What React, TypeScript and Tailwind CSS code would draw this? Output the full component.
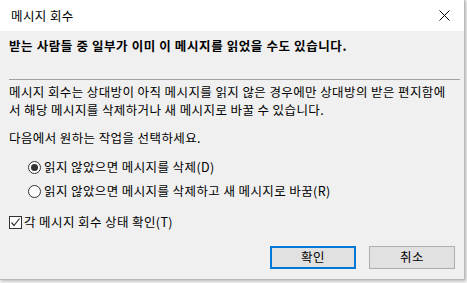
const font = { fontFamily: '"Noto Sans CJK KR", "Noto Sans", sans-serif' };

const Radio: React.FC<{ checked?: boolean; label: string }> = ({ checked, label }) => {
  return (
    <div className="flex h-[18px] items-center">
      <span className="flex h-[13px] w-[13px] items-center justify-center rounded-full border border-[#333333] bg-white">
        {checked && <span className="h-[7px] w-[7px] rounded-full bg-[#333333]" />}
      </span>
      <span className="ml-[3px]">{label}</span>
    </div>
  );
};

const App: React.FC = () => {
  return (
    <div className="h-[283px] w-[467px] overflow-hidden bg-[#f4f4f4] text-[12.5px] tracking-[0.4px] text-black" style={font}>
      <div className="flex h-[280px] w-[465px] flex-col border-r border-b border-[#b9b9b9] bg-[#f0f0f0] shadow-[1px_1px_3px_rgba(0,0,0,0.25)]">
        {/* title bar */}
        <div className="flex h-[31px] items-center justify-between bg-white pl-[11px] pr-[14px]">
          <span className="leading-[16px]">메시지 회수</span>
          <svg width="11" height="11" viewBox="0 0 11 11" className="text-black">
            <path d="M0.5 0.5 L10.5 10.5 M10.5 0.5 L0.5 10.5" stroke="currentColor" strokeWidth="1" />
          </svg>
        </div>

        <div className="flex flex-col pl-[9px] pt-[7px]">
          <div className="font-bold leading-[16px] tracking-[0.6px]">받는 사람들 중 일부가 이미 이 메시지를 읽었을 수도 있습니다.</div>
          <div className="mt-[25px] h-px w-[451px] bg-[#a0a0a0]" />
          <div className="mt-[3px] leading-[18px]">
            메시지 회수는 상대방이 아직 메시지를 읽지 않은 경우에만 상대방의 받은 편지함에
            <br />서 해당 메시지를 삭제하거나 새 메시지로 바꿀 수 있습니다.
          </div>
          <div className="mt-[10px] leading-[18px]">다음에서 원하는 작업을 선택하세요.</div>

          <div className="mt-[11px] ml-[19px] flex flex-col gap-[6px]">
            <Radio checked label="읽지 않았으면 메시지를 삭제(D)" />
            <Radio label="읽지 않았으면 메시지를 삭제하고 새 메시지로 바꿈(R)" />
          </div>

          <div className="mt-[13px] flex h-[18px] items-center">
            <span className="flex h-[13px] w-[13px] items-center justify-center border border-[#333333] bg-white">
              <svg width="11" height="11" viewBox="0 0 11 11">
                <path d="M1.5 5.5 L4 8.5 L9.5 1.5" fill="none" stroke="#333333" strokeWidth="1.2" />
              </svg>
            </span>
            <span className="ml-[2px]">각 메시지 회수 상태 확인(T)</span>
          </div>

          <div className="mt-[15px] flex justify-end gap-[13px] pr-[9px]">
            <button className="flex h-[23px] w-[86px] items-center justify-center border-2 border-[#0078d7] bg-[#e1e1e1]">
              확인
            </button>
            <button className="flex h-[23px] w-[86px] items-center justify-center border border-[#adadad] bg-[#e1e1e1]">
              취소
            </button>
          </div>
        </div>
      </div>
    </div>
  );
};

export default App;
